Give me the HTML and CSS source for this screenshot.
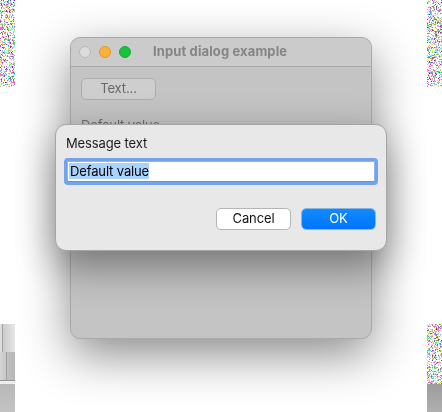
FILE: index.html
```html
<!DOCTYPE html>
<html lang="en">
<head>
<meta charset="utf-8">
<title>Input dialog example</title>
<link rel="stylesheet" href="styles.css">
</head>
<body>
<div class="desktop">
  <div class="edge">
    <canvas class="noise" width="15" height="87"></canvas>
    <div class="panels">
      <div class="panel-top"></div>
      <div class="panel-middle"></div>
      <div class="panel-line"></div>
      <div class="panel-bottom"></div>
    </div>
  </div>
  <main class="center">
    <section class="window">
      <header class="titlebar">
        <span class="light close"></span>
        <span class="light minimize"></span>
        <span class="light zoom"></span>
        <h1 class="title"><span>Input dialog example</span></h1>
      </header>
      <div class="content">
        <button class="button text-button"><span>Text...</span></button>
        <p class="value"><span>Default value</span></p>
      </div>
      <form class="sheet">
        <label class="message" for="value"><span>Message text</span></label>
        <div class="field" id="value"><span class="selection">Default value</span></div>
        <div class="actions">
          <button type="button" class="button cancel"><span>Cancel</span></button>
          <button type="button" class="button ok"><span>OK</span></button>
        </div>
      </form>
    </section>
  </main>
  <div class="edge">
    <canvas class="noise" width="15" height="87"></canvas>
    <div class="panels">
      <canvas class="noise" width="15" height="60"></canvas>
      <div class="panel-shade"></div>
    </div>
  </div>
</div>
<script src="noise.js"></script>
</body>
</html>
```
FILE: styles.css
```css
* { box-sizing: border-box; }
body {
  margin: 0;
  background: #fff;
  font-family: Inter, "Liberation Sans", sans-serif;
  font-size: 13px;
  line-height: 16px;
  letter-spacing: -.13px;
  color: #1c1c1c;
}
.desktop {
  display: grid;
  grid-template-columns: 15px 1fr 15px;
  width: 442px;
  height: 412px;
  overflow: hidden;
}
.edge {
  display: flex;
  flex-direction: column;
  justify-content: space-between;
}
.noise { display: block; }
.panels { height: 88px; }
.panel-top {
  height: 28px;
  background: linear-gradient(90deg, #ddd 2px, #999 2px, #aaa 3px, #ccc 3px, #e6e6e6 100%);
}
.panel-middle {
  height: 29px;
  border-bottom: 1px solid #959595;
  background: linear-gradient(90deg, #d4d4d4, #c6c6c6 6px, #989898 6px, #a8a8a8 7px, #c0c0c0 7px, #b7b7b7 100%);
}
.panel-line { height: 3px; background: #eee; }
.panel-bottom { height: 28px; background: linear-gradient(#b8b8b8, #c3c3c3); }
.panel-shade { height: 28px; background: linear-gradient(#9c9c9c, #b0b0b0); }
.center {
  padding: 37px 55px 0;
  overflow: hidden;
}
.window {
  position: relative;
  width: 302px;
  height: 302px;
  border: 1px solid #a9a9a9;
  border-radius: 10px;
  background: #c4c4c4;
  box-shadow: 0 16px 48px rgba(0, 0, 0, .46);
}
.titlebar {
  display: flex;
  align-items: center;
  height: 29px;
  padding: 0 8px;
  gap: 8px;
  border-bottom: 1px solid #acacac;
  border-radius: 9px 9px 0 0;
  background: #cbcbcb;
}
.light {
  width: 12px;
  height: 12px;
  border: 1px solid #b7b7b7;
  border-radius: 50%;
  background: #dcdcdc;
}
.minimize { border-color: #e2972e; background: #ffb036; }
.zoom { border-color: #16a832; background: #18c23c; }
.title {
  margin: -2px 0 0 14px;
  font-size: 13px;
  font-weight: 700;
  letter-spacing: .12px;
  color: #858585;
  white-space: nowrap;
}
.content { padding: 11px 10px; color: #6d6d6d; }
.button {
  display: flex;
  align-items: center;
  justify-content: center;
  width: 75px;
  height: 22px;
  padding: 0 0 2px;
  border: 1px solid #b5b5b5;
  border-radius: 5px;
  font: inherit;
  letter-spacing: inherit;
  color: #111;
  background: #fff;
}
.text-button { border-color: #adadad; color: #696969; background: #cecece; }
.value { margin: 17px 0 0; }
.sheet {
  position: absolute;
  left: -16px;
  top: 86px;
  width: 332px;
  height: 127px;
  padding: 10px 10px 11px;
  border: 1px solid #a5a5a5;
  border-radius: 11px;
  background: #e8e8e8;
  box-shadow: 0 15px 42px rgba(0, 0, 0, .42);
}
.message { display: block; }
.field {
  width: 314px;
  height: 27px;
  margin: 7px 0 0 -2px;
  padding: 2px;
  border: 3px solid #73a3eb;
  border-radius: 4px;
  background: #fff;
  box-shadow: inset 0 -1px #6192df, inset 0 0 0 1px #8db4ee;
  color: #000;
}
.selection {
  display: block;
  width: 80px;
  height: 16px;
  padding-left: 1px;
  background: #a9d3ff;
  white-space: nowrap;
}
.actions {
  display: flex;
  justify-content: flex-end;
  gap: 10px;
  margin-top: 23px;
}
.ok {
  border-color: #8ab4e2;
  background: linear-gradient(#108bff, #0074fb) padding-box;
  color: #fff;
}
```
FILE: noise.js
```js
let seed = 4711;
function random() {
  seed = (seed * 1664525 + 1013904223) >>> 0;
  return seed / 4294967296;
}
const level = () => Math.round(255 * Math.pow(random(), .45));
for (const canvas of document.querySelectorAll('.noise')) {
  const context = canvas.getContext('2d');
  for (let y = 0; y < canvas.height; y++) {
    for (let x = 0; x < canvas.width; x++) {
      context.fillStyle = random() < .48 ? '#fff' : `rgb(${level()}, ${level()}, ${level()})`;
      context.fillRect(x, y, 1, 1);
    }
  }
}
```
